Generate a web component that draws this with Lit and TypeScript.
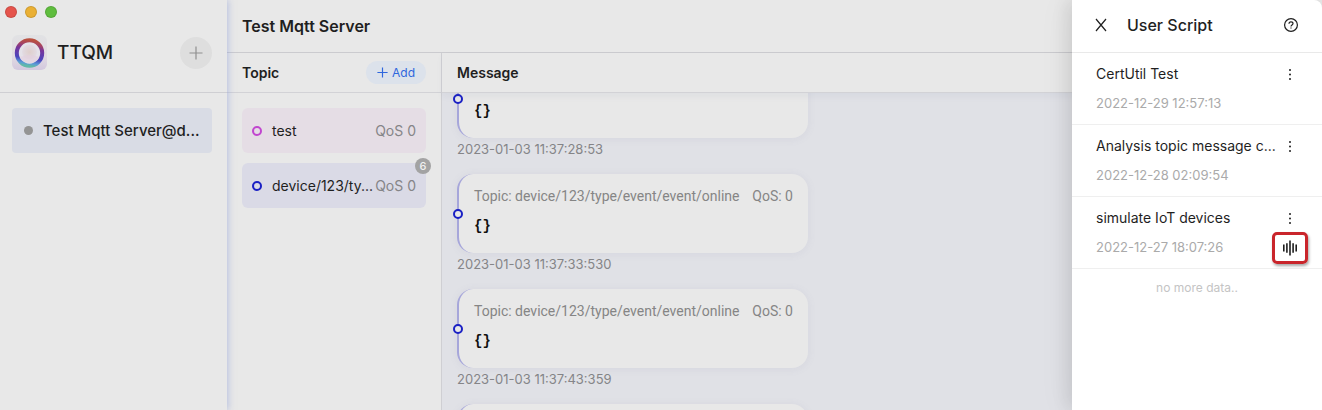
import { LitElement, html, css, svg, nothing } from "lit";
import { customElement, query } from "lit/decorators.js";
import { styleMap } from "lit/directives/style-map.js";

interface Topic {
  name: string;
  qos: number;
  color: string;
  background: string;
  unread?: number;
}

interface Script {
  name: string;
  date: string;
  running?: boolean;
}

const TOPICS: Topic[] = [
  { name: "test", qos: 0, color: "#c146cf", background: "#e5dde5" },
  { name: "device/123/ty...", qos: 0, color: "#1a20c4", background: "#dadae6", unread: 6 },
];

const MESSAGES = [
  "2023-01-03 11:37:28:53",
  "2023-01-03 11:37:33:530",
  "2023-01-03 11:37:43:359",
  "2023-01-03 11:37:48:412",
];

const SCRIPTS: Script[] = [
  { name: "CertUtil Test", date: "2022-12-29 12:57:13" },
  { name: "Analysis topic message c...", date: "2022-12-28 02:09:54" },
  { name: "simulate IoT devices", date: "2022-12-27 18:07:26", running: true },
];

const logo = svg`
  <svg width="35" height="35" viewBox="0 0 35 35" aria-hidden="true">
    <defs>
      <linearGradient id="tile" x1="0" y1="0" x2="0" y2="1">
        <stop offset="0" stop-color="#e1e2e4" />
        <stop offset="0.6" stop-color="#e2dbe2" />
        <stop offset="1" stop-color="#d2c8de" />
      </linearGradient>
      <linearGradient id="ring" x1="0.6" y1="0" x2="0.45" y2="1">
        <stop offset="0" stop-color="#b9503f" />
        <stop offset="0.15" stop-color="#a84560" />
        <stop offset="0.35" stop-color="#77359c" />
        <stop offset="0.72" stop-color="#4b45bd" />
        <stop offset="0.9" stop-color="#5b9bd8" />
        <stop offset="1" stop-color="#62b9a8" />
      </linearGradient>
      <radialGradient id="core">
        <stop offset="0" stop-color="#dfcfcc" />
        <stop offset="1" stop-color="#e2dbe3" />
      </radialGradient>
    </defs>
    <rect width="35" height="35" rx="6" fill="url(#tile)" />
    <circle cx="17.5" cy="18" r="12.7" fill="#e5e2e9" stroke="url(#ring)" stroke-width="4" />
    <circle cx="17.5" cy="17" r="7.5" fill="url(#core)" />
    <path d="M8 22q9-4 19 0q-3 6-9.500 6t-9.500-6" fill="#e2cedd" opacity=".6" />
  </svg>`;

const plus = (size: number, width: number) => svg`
  <svg width=${size} height=${size} viewBox="0 0 14 14" fill="none" stroke="currentColor" stroke-width=${width} aria-hidden="true">
    <path d="M7 .5v13M.5 7h13" />
  </svg>`;

const cross = svg`
  <svg width="12" height="14" viewBox="0 0 12 14" fill="none" stroke="currentColor" stroke-width="1.2" aria-hidden="true">
    <path d="M1 1l10 12M11 1L1 13" />
  </svg>`;

const help = svg`
  <svg width="16" height="16" viewBox="0 0 16 16" fill="none" stroke="currentColor" stroke-width="1.2" aria-hidden="true">
    <circle cx="8" cy="8" r="6.4" />
    <path d="M6 6.700c0-1.200.900-1.900 2-1.900s2 .700 2 1.800c0 1.400-2 1.500-2 2.900" />
    <path d="M8 10.400v1.200" />
  </svg>`;

const dots = svg`
  <svg width="4" height="12" viewBox="0 0 4 12" fill="currentColor" aria-hidden="true">
    <circle cx="2" cy="2" r="1" /><circle cx="2" cy="6.500" r="1" /><circle cx="2" cy="11" r="1" />
  </svg>`;

const wave = svg`
  <svg width="16" height="16" viewBox="0 0 16 16" fill="none" stroke="currentColor" stroke-width="1.6" aria-hidden="true">
    <path d="M1.800 4.500v7M4.900 3.200v9.600M8 .5v15M11.100 3.200v9.600M14.200 4.500v7" />
  </svg>`;

@customElement("app-root")
export class AppRoot extends LitElement {
  @query(".feed") private feed!: HTMLElement;

  static styles = css`
    :host {
      display: block;
      position: relative;
      height: 100vh;
      overflow: hidden;
      background: #e8e8e8;
      color: #1f1f1f;
      font: 14px/20px Inter, "Liberation Sans", sans-serif;
    }
    * { box-sizing: border-box; }
    h1, h2, p, ul { margin: 0; padding: 0; }
    ul { list-style: none; }
    svg { display: block; flex: none; }
    button {
      display: flex;
      align-items: center;
      justify-content: center;
      padding: 0;
      border: 0;
      background: none;
      color: inherit;
      font: inherit;
      cursor: pointer;
    }
    .app {
      display: grid;
      grid-template-columns: 227px minmax(0, 1fr);
      grid-template-rows: minmax(0, 1fr);
      height: 100%;
      isolation: isolate;
    }
    .sidebar {
      z-index: 2;
      box-shadow: 1px 0 7px rgba(130, 150, 215, 0.5);
      background: #e8e8e8;
    }
    .lights {
      display: flex;
      gap: 8px;
      height: 24px;
      padding: 6px 5px 0;
    }
    .light {
      width: 12px;
      height: 12px;
      border-radius: 50%;
      border: 1px solid rgba(0, 0, 0, 0.12);
    }
    .red { background: #e5544c; }
    .amber { background: #eab034; }
    .green { background: #5fbd3e; }
    .brand {
      display: flex;
      align-items: center;
      height: 69px;
      padding: 0 15px 11px 12px;
      border-bottom: 1px solid #cfcfd3;
    }
    .brand-name {
      flex: 1;
      padding-left: 10px;
      font-size: 19px;
      font-weight: 500;
      line-height: 24px;
    }
    .new {
      width: 32px;
      height: 32px;
      border-radius: 50%;
      background: #dedede;
      color: #8f8f8f;
    }
    .server {
      display: flex;
      gap: 10px;
      width: calc(100% - 27px);
      height: 45px;
      margin: 15px 15px 0 12px;
      padding-left: 12px;
      justify-content: flex-start;
      border-radius: 4px;
      background: #d9dce5;
      font-size: 15px;
      font-weight: 500;
      white-space: nowrap;
    }
    .status {
      width: 9px;
      height: 9px;
      border-radius: 50%;
      background: #949494;
    }
    .main {
      display: grid;
      grid-template-columns: 215px minmax(0, 1fr);
      grid-template-rows: 53px minmax(0, 1fr);
    }
    .title {
      display: flex;
      align-items: center;
      grid-column: 1 / -1;
      padding-left: 15px;
      border-bottom: 1px solid #cbcbcf;
      font-size: 16px;
      font-weight: 600;
    }
    .column {
      display: flex;
      flex-direction: column;
      min-height: 0;
    }
    .topics { border-right: 1px solid #cfcfd3; }
    .bar {
      display: flex;
      flex: none;
      align-items: center;
      justify-content: space-between;
      height: 40px;
      padding: 0 15px;
      border-bottom: 1px solid #d2d2d6;
    }
    .messages .bar { z-index: 1; box-shadow: 0 4px 6px rgba(90, 95, 130, 0.06); }
    .heading { font-size: 14px; font-weight: 600; }
    .add {
      gap: 4px;
      width: 60px;
      height: 23px;
      border-radius: 12px;
      background: #dce2eb;
      color: #2f67dd;
      font-size: 12px;
    }
    .topic-list {
      display: grid;
      grid-template-columns: minmax(0, 1fr);
      gap: 10px;
      padding: 15px;
    }
    .topic {
      position: relative;
      display: flex;
      align-items: center;
      gap: 2px;
      height: 45px;
      padding: 0 10px;
      border-radius: 6px;
      white-space: nowrap;
    }
    .ring {
      flex: none;
      width: 10px;
      height: 10px;
      border: 2px solid;
      border-radius: 50%;
    }
    .topic-name {
      flex: 1;
      padding-left: 8px;
    }
    .qos { color: #858588; }
    .badge {
      position: absolute;
      top: -5px;
      right: -5px;
      width: 16px;
      height: 16px;
      border-radius: 50%;
      background: #a3a3a3;
      color: #f0f0f0;
      font-size: 11px;
      font-weight: 500;
      line-height: 16px;
      text-align: center;
    }
    .feed {
      flex: 1;
      min-height: 0;
      overflow: hidden;
      padding: 24px 15px;
      background: #e0e1e6;
    }
    .card {
      position: relative;
      width: 351px;
      height: 79px;
      padding: 12px 15px;
      border-left: 2px solid #a6a6da;
      border-radius: 16px;
      background: #e8e8e8;
      box-shadow: 0 1px 8px rgba(110, 115, 150, 0.09);
    }
    .card .ring {
      position: absolute;
      top: calc(50% - 5px);
      left: -6px;
      border-color: #1a20c4;
      background: #e8e8e8;
    }
    .meta {
      display: flex;
      justify-content: space-between;
      color: #858585;
      font-family: Roboto, Inter, sans-serif;
      white-space: nowrap;
    }
    .payload {
      margin: 0;
      padding-top: 10px;
      color: #111;
      font: bold 14px/20px "Liberation Mono", monospace;
    }
    .time {
      display: block;
      height: 36px;
      padding-top: 1px;
      color: #858588;
      font-size: 13px;
    }
    .drawer {
      position: absolute;
      z-index: 1;
      inset: 0 0 0 auto;
      width: 250px;
      border-top-right-radius: 8px;
      background: #fff;
      box-shadow: -6px 0 16px rgba(0, 0, 0, 0.08), -2px 0 36px rgba(0, 0, 0, 0.06);
    }
    .drawer-head {
      display: flex;
      align-items: center;
      height: 53px;
      padding: 0 23px 2px;
      border-bottom: 1px solid #e9e9e9;
    }
    .drawer-title {
      flex: 1;
      padding-left: 20px;
      font-size: 16px;
      font-weight: 500;
    }
    .script {
      display: grid;
      grid-template-columns: minmax(0, 1fr) 36px;
      align-content: start;
      row-gap: 9px;
      height: 72px;
      padding: 11px 14px 0 24px;
      border-bottom: 1px solid #efefef;
      white-space: nowrap;
    }
    .date { color: #aaa; font-size: 13px; }
    .running {
      width: 36px;
      height: 32px;
      margin-top: -5px;
      border: 3px solid #c9252b;
      border-radius: 5px;
      box-shadow: 1px 2px 3px rgba(0, 0, 0, 0.35);
    }
    .end {
      padding-top: 9px;
      color: #c4c4c4;
      font-size: 12px;
      text-align: center;
    }
  `;

  firstUpdated() {
    this.feed.scrollTop = 58;
  }

  render() {
    return html`
      <div class="app">
        <aside class="sidebar">
          <div class="lights">
            <span class="light red"></span><span class="light amber"></span><span class="light green"></span>
          </div>
          <div class="brand">
            ${logo}
            <span class="brand-name">TTQM</span>
            <button class="new" aria-label="New connection">${plus(14, 1.2)}</button>
          </div>
          <button class="server"><span class="status"></span>Test Mqtt Server@d...</button>
        </aside>
        <main class="main">
          <h1 class="title">Test Mqtt Server</h1>
          <section class="column topics">
            <div class="bar">
              <h2 class="heading">Topic</h2>
              <button class="add">${plus(11, 1.5)}Add</button>
            </div>
            <ul class="topic-list">
              ${TOPICS.map((t) => html`
                <li class="topic" style=${styleMap({ background: t.background })}>
                  <span class="ring" style=${styleMap({ borderColor: t.color })}></span>
                  <span class="topic-name">${t.name}</span>
                  <span class="qos">QoS ${t.qos}</span>
                  ${t.unread ? html`<span class="badge">${t.unread}</span>` : nothing}
                </li>`)}
            </ul>
          </section>
          <section class="column messages">
            <div class="bar"><h2 class="heading">Message</h2></div>
            <div class="feed">
              ${MESSAGES.map((time) => html`
                <article class="card">
                  <span class="ring"></span>
                  <div class="meta"><span>Topic: device/123/type/event/event/online</span><span>QoS: 0</span></div>
                  <pre class="payload">{}</pre>
                </article>
                <time class="time">${time}</time>`)}
            </div>
          </section>
        </main>
      </div>
      <aside class="drawer">
        <div class="drawer-head">
          <button aria-label="Close">${cross}</button>
          <h2 class="drawer-title">User Script</h2>
          <button aria-label="Help">${help}</button>
        </div>
        <ul>
          ${SCRIPTS.map((s) => html`
            <li class="script">
              <span>${s.name}</span>
              <button aria-label="More">${dots}</button>
              <span class="date">${s.date}</span>
              ${s.running ? html`<button class="running" aria-label="Running">${wave}</button>` : nothing}
            </li>`)}
        </ul>
        <p class="end">no more data..</p>
      </aside>
    `;
  }
}
